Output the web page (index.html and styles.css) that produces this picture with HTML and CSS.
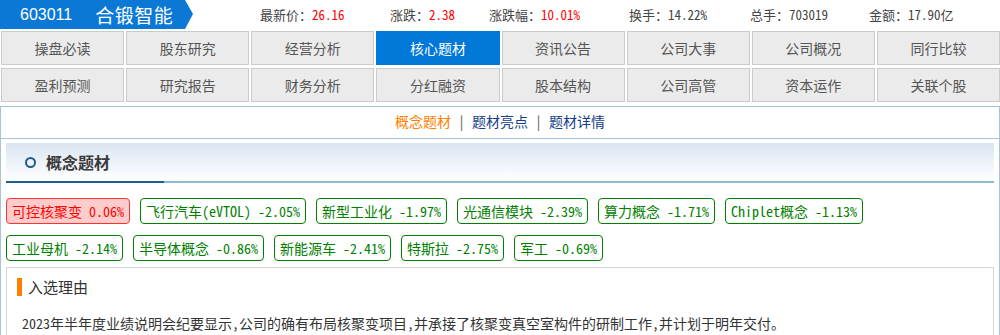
FILE: index.html
```html
<!DOCTYPE html>
<html lang="zh-CN">
<head>
  <meta charset="UTF-8">
  <title>合锻智能 - 核心题材</title>
  <link rel="stylesheet" href="styles.css">
</head>
<body>
  <div class="topbar">
    <div class="stock">
      <span class="code">603011</span>
      <span class="name">合锻智能</span>
    </div>
    <ul class="quote">
      <li class="q-price">最新价：<span class="up">26.16</span></li>
      <li class="q-chg">涨跌：<span class="up">2.38</span></li>
      <li class="q-pct">涨跌幅：<span class="up">10.01%</span></li>
      <li class="q-turn">换手：14.22%</li>
      <li class="q-vol">总手：703019</li>
      <li class="q-amt">金额：17.90亿</li>
    </ul>
  </div>

  <div class="menu">
    <a href="#">操盘必读</a>
    <a href="#">股东研究</a>
    <a href="#">经营分析</a>
    <a href="#" class="active">核心题材</a>
    <a href="#">资讯公告</a>
    <a href="#">公司大事</a>
    <a href="#">公司概况</a>
    <a href="#">同行比较</a>
    <a href="#">盈利预测</a>
    <a href="#">研究报告</a>
    <a href="#">财务分析</a>
    <a href="#">分红融资</a>
    <a href="#">股本结构</a>
    <a href="#">公司高管</a>
    <a href="#">资本运作</a>
    <a href="#">关联个股</a>
  </div>

  <div class="panel">
    <div class="subnav">
      <a href="#" class="cur">概念题材</a>
      <span class="sep">|</span>
      <a href="#">题材亮点</a>
      <span class="sep">|</span>
      <a href="#">题材详情</a>
    </div>

    <div class="section-head">
      <i class="ring"></i>
      <h2>概念题材</h2>
    </div>

    <div class="tags">
      <span class="tag hot">可控核聚变 0.06%</span>
      <span class="tag">飞行汽车(eVTOL) -2.05%</span>
      <span class="tag">新型工业化 -1.97%</span>
      <span class="tag">光通信模块 -2.39%</span>
      <span class="tag">算力概念 -1.71%</span>
      <span class="tag">Chiplet概念 -1.13%</span>
      <span class="tag">工业母机 -2.14%</span>
      <span class="tag">半导体概念 -0.86%</span>
      <span class="tag">新能源车 -2.41%</span>
      <span class="tag">特斯拉 -2.75%</span>
      <span class="tag">军工 -0.69%</span>
    </div>

    <div class="reason">
      <div class="reason-title">入选理由</div>
      <p>2023年半年度业绩说明会纪要显示,公司的确有布局核聚变项目,并承接了核聚变真空室构件的研制工作,并计划于明年交付。</p>
    </div>
  </div>
</body>
</html>
```

FILE: styles.css
```css
body {
  margin: 0;
  background: #fff;
  font-family: "Noto Sans Mono CJK SC", "Noto Sans CJK SC", monospace;
  font-size: 13px;
  color: #333;
}

a {
  text-decoration: none;
}

/* top quote bar */
.topbar {
  display: flex;
  align-items: center;
  height: 29px;
}

.stock {
  display: flex;
  align-items: center;
  width: 193px;
  height: 29px;
  background: #0a78d4;
  color: #fff;
  clip-path: polygon(0 0, 185px 0, 193px 14px, 185px 29px, 0 29px);
}

.stock .code {
  margin-left: 20px;
  font-family: "Liberation Sans", Arial, sans-serif;
  font-size: 16px;
}

.stock .name {
  margin-left: 23px;
  font-family: "Noto Sans CJK SC", sans-serif;
  font-size: 19px;
  letter-spacing: 0.5px;
}

.quote {
  display: flex;
  margin: 0 0 0 67px;
  padding: 0;
  list-style: none;
  color: #444;
}

.quote li {
  white-space: nowrap;
}

.quote .q-price { width: 130px; }
.quote .q-chg { width: 99px; }
.quote .q-pct { width: 140px; }
.quote .q-turn { width: 121px; }
.quote .q-vol { width: 119px; }

.quote .up {
  color: #f00;
}

/* menu */
.menu {
  display: grid;
  grid-template-columns: repeat(8, 1fr);
  gap: 3px 2px;
  width: 999px;
  margin: 2px 0 0 1px;
}

.menu a {
  display: block;
  height: 32px;
  line-height: 32px;
  text-align: center;
  background: #ebebeb;
  border: 1px solid #cbcbcb;
  color: #555;
  font-size: 14px;
}

.menu a.active {
  background: #0078d7;
  border-color: #0078d7;
  color: #fff;
}

/* panel */
.panel {
  margin-top: 4px;
  height: 240px;
  border: 1px solid #a9c3d8;
  border-bottom: none;
}

.subnav {
  height: 31px;
  line-height: 29px;
  text-align: center;
  font-size: 14px;
  border-bottom: 1px solid #a9c3d8;
}

.subnav a {
  color: #153e8c;
}

.subnav a.cur {
  color: #ff7f00;
}

.subnav .sep {
  color: #555;
}

.section-head {
  display: flex;
  align-items: center;
  height: 38px;
  margin: 4px 5px 0 5px;
  background: linear-gradient(#dae5f2, #fff);
  border-bottom: 2px solid #8fbad6;
  position: relative;
}

.section-head::after {
  content: "";
  position: absolute;
  left: 0;
  bottom: -2px;
  width: 158px;
  height: 2px;
  background: #1a5f8e;
}

.ring {
  width: 7px;
  height: 7px;
  margin-left: 19px;
  border: 2px solid #1d5d8c;
  border-radius: 50%;
}

.section-head h2 {
  margin: 0 0 0 10px;
  font-size: 16px;
  font-weight: bold;
  color: #3a3a3a;
}

/* tags */
.tags {
  display: flex;
  flex-wrap: wrap;
  gap: 11px 10px;
  width: 880px;
  margin: 15px 5px 0 5px;
}

.tag {
  height: 24px;
  line-height: 24px;
  padding: 0 5px;
  border: 1px solid #008000;
  border-radius: 4px;
  color: #008000;
  font-size: 14px;
  white-space: nowrap;
}

.tag.hot {
  background: #ffcccc;
  border-color: #f33;
  color: #f00;
}

/* reason */
.reason {
  margin: 6px 5px 0 5px;
  height: 80px;
  border: 1px solid #d4d4d4;
  border-bottom: none;
}

.reason-title {
  margin: 10px 0 0 10px;
  padding-left: 6px;
  border-left: 5px solid #ff7f00;
  height: 18px;
  line-height: 18px;
  font-size: 15px;
  color: #333;
}

.reason p {
  margin: 17px 0 0 15px;
  font-size: 14px;
  color: #333;
}
```
